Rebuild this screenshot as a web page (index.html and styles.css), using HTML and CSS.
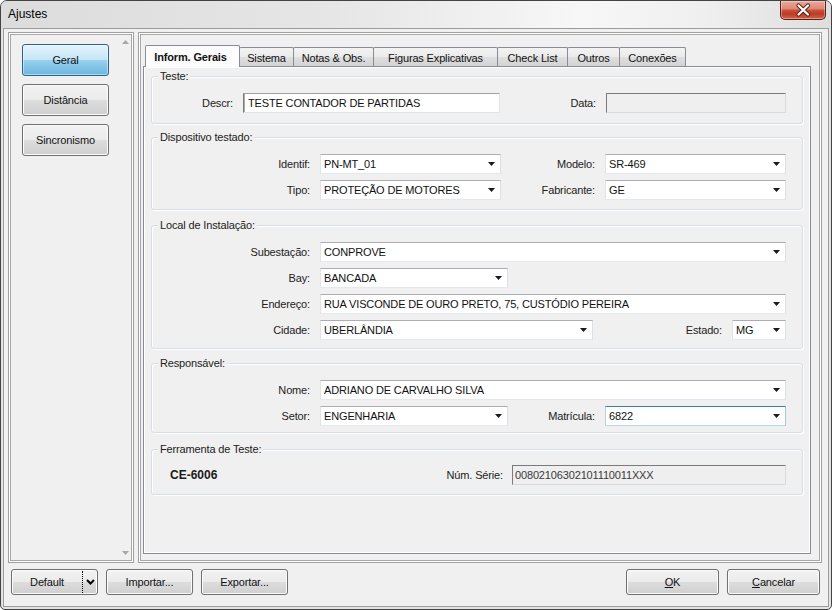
FILE: index.html
```html
<!DOCTYPE html>
<html lang="pt-BR">
<head>
<meta charset="utf-8">
<title>Ajustes</title>
<link rel="stylesheet" href="styles.css">
</head>
<body>
<div class="window">
  <div class="titlebar">
    <span class="title">Ajustes</span>
    <span class="close-btn">
      <svg width="44" height="18" viewBox="0 0 44 18"><path d="M17.5 4.5L27 13.5M27 4.5L17.5 13.5" stroke="#5b1c12" stroke-width="4.2" stroke-linecap="round"/><path d="M17.5 4.5L27 13.5M27 4.5L17.5 13.5" stroke="#ffffff" stroke-width="2.3" stroke-linecap="round"/></svg>
    </span>
  </div>
  <div class="client">
    <div class="main">
      <div class="panel nav">
        <div class="nav-buttons">
          <div class="btn nav-btn nav-btn-active">Geral</div>
          <div class="btn nav-btn">Distância</div>
          <div class="btn nav-btn">Sincronismo</div>
        </div>
        <div class="vscroll">
          <svg width="7" height="4" viewBox="0 0 7 4"><path d="M0 4H7L3.5 0Z" fill="#a8a8a8"/></svg>
          <svg width="7" height="4" viewBox="0 0 7 4"><path d="M0 0H7L3.5 4Z" fill="#a8a8a8"/></svg>
        </div>
      </div>
      <div class="panel content">
        <div class="tabs">
          <div class="tab tab-active t-inform">Inform. Gerais</div>
          <div class="tab t-sistema">Sistema</div>
          <div class="tab t-notas">Notas &amp; Obs.</div>
          <div class="tab t-figuras">Figuras Explicativas</div>
          <div class="tab t-check">Check List</div>
          <div class="tab t-outros">Outros</div>
          <div class="tab t-conexoes">Conexões</div>
        </div>
        <div class="page">
          <div class="group g1">
            <div class="legend">Teste:</div>
            <div class="row">
              <span class="lbl w-descr">Descr:</span>
              <div class="edit w-descr-in"><span class="val">TESTE CONTADOR DE PARTIDAS</span></div>
              <span class="lbl w-data">Data:</span>
              <div class="edit disabled w-data-in"></div>
            </div>
          </div>

          <div class="group g2">
            <div class="legend">Dispositivo testado:</div>
            <div class="row">
              <span class="lbl w-main">Identif:</span>
              <div class="combo w-half"><span class="val">PN-MT_01</span><span class="dd"><svg width="7" height="4" viewBox="0 0 7 4"><path d="M0 0H7L3.5 4Z" fill="#1a1a1a"/></svg></span></div>
              <span class="lbl w-right">Modelo:</span>
              <div class="combo w-half"><span class="val">SR-469</span><span class="dd"><svg width="7" height="4" viewBox="0 0 7 4"><path d="M0 0H7L3.5 4Z" fill="#1a1a1a"/></svg></span></div>
            </div>
            <div class="row">
              <span class="lbl w-main">Tipo:</span>
              <div class="combo w-half"><span class="val">PROTEÇÃO DE MOTORES</span><span class="dd"><svg width="7" height="4" viewBox="0 0 7 4"><path d="M0 0H7L3.5 4Z" fill="#1a1a1a"/></svg></span></div>
              <span class="lbl w-right">Fabricante:</span>
              <div class="combo w-half"><span class="val">GE</span><span class="dd"><svg width="7" height="4" viewBox="0 0 7 4"><path d="M0 0H7L3.5 4Z" fill="#1a1a1a"/></svg></span></div>
            </div>
          </div>

          <div class="group g3">
            <div class="legend">Local de Instalação:</div>
            <div class="row">
              <span class="lbl w-main">Subestação:</span>
              <div class="combo w-full"><span class="val">CONPROVE</span><span class="dd"><svg width="7" height="4" viewBox="0 0 7 4"><path d="M0 0H7L3.5 4Z" fill="#1a1a1a"/></svg></span></div>
            </div>
            <div class="row">
              <span class="lbl w-main">Bay:</span>
              <div class="combo w-short"><span class="val">BANCADA</span><span class="dd"><svg width="7" height="4" viewBox="0 0 7 4"><path d="M0 0H7L3.5 4Z" fill="#1a1a1a"/></svg></span></div>
            </div>
            <div class="row">
              <span class="lbl w-main">Endereço:</span>
              <div class="combo w-full"><span class="val">RUA VISCONDE DE OURO PRETO, 75, CUSTÓDIO PEREIRA</span><span class="dd"><svg width="7" height="4" viewBox="0 0 7 4"><path d="M0 0H7L3.5 4Z" fill="#1a1a1a"/></svg></span></div>
            </div>
            <div class="row">
              <span class="lbl w-main">Cidade:</span>
              <div class="combo w-cidade"><span class="val">UBERLÂNDIA</span><span class="dd"><svg width="7" height="4" viewBox="0 0 7 4"><path d="M0 0H7L3.5 4Z" fill="#1a1a1a"/></svg></span></div>
              <span class="lbl w-estado">Estado:</span>
              <div class="combo w-uf"><span class="val">MG</span><span class="dd"><svg width="7" height="4" viewBox="0 0 7 4"><path d="M0 0H7L3.5 4Z" fill="#1a1a1a"/></svg></span></div>
            </div>
          </div>

          <div class="group g4">
            <div class="legend">Responsável:</div>
            <div class="row">
              <span class="lbl w-main">Nome:</span>
              <div class="combo w-full"><span class="val">ADRIANO DE CARVALHO SILVA</span><span class="dd"><svg width="7" height="4" viewBox="0 0 7 4"><path d="M0 0H7L3.5 4Z" fill="#1a1a1a"/></svg></span></div>
            </div>
            <div class="row">
              <span class="lbl w-main">Setor:</span>
              <div class="combo w-short"><span class="val">ENGENHARIA</span><span class="dd"><svg width="7" height="4" viewBox="0 0 7 4"><path d="M0 0H7L3.5 4Z" fill="#1a1a1a"/></svg></span></div>
              <span class="lbl w-matricula">Matrícula:</span>
              <div class="combo focused w-half"><span class="val">6822</span><span class="dd"><svg width="7" height="4" viewBox="0 0 7 4"><path d="M0 0H7L3.5 4Z" fill="#1a1a1a"/></svg></span></div>
            </div>
          </div>

          <div class="group g5">
            <div class="legend">Ferramenta de Teste:</div>
            <div class="row">
              <span class="tool-name">CE-6006</span>
              <span class="lbl w-serie">Núm. Série:</span>
              <div class="edit disabled w-serie-in"><span class="val">00802106302101110011XXX</span></div>
            </div>
          </div>
        </div>
      </div>
    </div>
    <div class="footer">
      <div class="btn foot-btn split">
        <span class="split-label">Default</span>
        <span class="split-sep"></span>
        <span class="split-arrow"><svg width="9" height="6" viewBox="0 0 9 6"><path d="M1 1L4.5 4.5L8 1" fill="none" stroke="#000" stroke-width="2"/></svg></span>
      </div>
      <div class="btn foot-btn">Importar...</div>
      <div class="btn foot-btn">Exportar...</div>
      <div class="footer-spacer"></div>
      <div class="btn foot-btn-wide"><span><u>O</u>K</span></div>
      <div class="btn foot-btn-wide"><span><u>C</u>ancelar</span></div>
    </div>
  </div>
</div>
</body>
</html>
```
FILE: styles.css
```css
* { box-sizing: border-box; }
html, body { margin: 0; padding: 0; }
body {
  width: 832px;
  height: 610px;
  overflow: hidden;
  background: #ffffff;
  font-family: "Liberation Sans", Arial, sans-serif;
  font-size: 11px;
  letter-spacing: -0.15px;
  color: #222222;
}

/* window frame */
.window {
  width: 832px;
  height: 610px;
  border: 1px solid #434343;
  border-radius: 7px 7px 5px 5px;
  background: #e3e3e3;
  display: flex;
  flex-direction: column;
  overflow: hidden;
}
.titlebar {
  height: 27px;
  flex: none;
  display: flex;
  align-items: flex-start;
  padding: 0 5px 0 7px;
  background: linear-gradient(90deg, #dcdcdc 0%, #e6e6e6 40%, #f7f7f7 70%, #efefef 85%, #dedede 100%);
}
.title {
  line-height: 27px;
  font-size: 12px;
  letter-spacing: 0;
  color: #000;
}
.close-btn {
  margin-left: auto;
  width: 46px;
  height: 19px;
  border: 1px solid #5a2118;
  border-top: none;
  border-radius: 0 0 5px 5px;
  background: linear-gradient(180deg, #eba99a 0%, #dc8a77 42%, #c9503a 52%, #bd3a24 72%, #d4654b 100%);
  box-shadow: inset 0 0 0 1px rgba(255, 255, 255, 0.35);
  display: flex;
  align-items: center;
  justify-content: center;
}
.client {
  flex: 1;
  margin: 0 2px 2px;
  border: 1px solid #9c9c9c;
  background: #f0f0f0;
  display: flex;
  flex-direction: column;
}

/* main area */
.main {
  display: flex;
  gap: 4px;
  height: 531px;
  margin-top: 3px;
  padding-left: 4px;
  flex: none;
}
.panel {
  border: 1px solid #a0a0a0;
  box-shadow: inset 0 0 0 1px #ffffff, inset 0 0 0 2px #a8a8a8;
}
.nav {
  width: 126px;
  display: flex;
  padding-right: 2px;
}
.nav-buttons {
  flex: 1;
  display: flex;
  flex-direction: column;
  gap: 8px;
  padding: 11px 0 0 13px;
}
.vscroll {
  width: 11px;
  display: flex;
  flex-direction: column;
  justify-content: space-between;
  align-items: center;
  padding: 7px 0;
}
.vscroll svg { display: block; }

/* buttons */
.btn {
  border: 1px solid #707070;
  border-radius: 3px;
  background: linear-gradient(180deg, #f2f2f2 0%, #ebebeb 49%, #dddddd 50%, #cfcfcf 100%);
  box-shadow: inset 0 0 0 1px #fbfbfb;
  display: flex;
  align-items: center;
  justify-content: center;
  color: #111;
  white-space: nowrap;
}
.nav-btn {
  width: 87px;
  height: 32px;
}
.nav-btn-active {
  border-color: #2c628b;
  background: linear-gradient(180deg, #e5f4fc 0%, #c4e5f6 49%, #98d1ef 50%, #6cb6de 100%);
  box-shadow: inset 0 0 0 1px rgba(255, 255, 255, 0.45);
}

/* tabs */
.content {
  width: 684px;
  padding: 12px 10px 8px 4px;
  display: flex;
  flex-direction: column;
}
.tabs {
  display: flex;
  align-items: flex-end;
  height: 21px;
  padding-left: 2px;
  flex: none;
}
.tab {
  height: 19px;
  border: 1px solid #898c95;
  border-bottom: none;
  border-radius: 2px 2px 0 0;
  margin-left: -1px;
  padding-top: 1px;
  background: linear-gradient(180deg, #f3f3f3 0%, #ebebeb 49%, #dfdfdf 50%, #d3d3d3 100%);
  display: flex;
  align-items: center;
  justify-content: center;
  white-space: nowrap;
  color: #111;
}
.tab-active {
  height: 22px;
  margin-left: 0;
  margin-bottom: -1px;
  padding-top: 0;
  padding-right: 4px;
  background: #fcfcfc;
  font-weight: bold;
  position: relative;
  z-index: 1;
}
.t-inform { width: 95px; }
.t-sistema { width: 55px; }
.t-notas { width: 81px; }
.t-figuras { width: 125px; }
.t-check { width: 71px; }
.t-outros { width: 53px; }
.t-conexoes { width: 67px; }

.page {
  height: 488px;
  border: 1px solid #898c95;
  box-shadow: inset 0 0 0 1px #ffffff;
  background: #f0f0f0;
  padding: 0 7px;
  display: flex;
  flex-direction: column;
  flex: none;
}

/* group boxes */
.group {
  display: flex;
  flex-direction: column;
  flex: none;
  border: 1px solid #d5dfe5;
  border-radius: 3px;
  box-shadow: inset 1px 1px 0 #ffffff, 1px 1px 0 #ffffff;
}
.legend {
  align-self: flex-start;
  margin: -7px 0 0 6px;
  padding: 0 2px;
  height: 13px;
  line-height: 13px;
  background: #f0f0f0;
  white-space: nowrap;
}
.g1 { margin-top: 9px; padding-bottom: 10px; }
.g2 { margin-top: 13px; padding-bottom: 9px; }
.g3 { margin-top: 15px; padding-bottom: 8px; }
.g4 { margin-top: 14px; padding-bottom: 6px; }
.g5 { margin-top: 16px; padding-bottom: 9px; }

.row {
  display: flex;
  align-items: center;
  height: 20px;
  margin-top: 6px;
  flex: none;
}
.legend + .row { margin-top: 10px; }
.g5 .legend + .row { margin-top: 9px; }

.lbl {
  flex: none;
  text-align: right;
  margin-right: 10px;
  white-space: nowrap;
}
.w-descr { width: 81px; }
.w-data { width: 96px; }
.w-main { width: 158px; }
.w-right { width: 94px; }
.w-estado { width: 129px; }
.w-matricula { width: 87px; }
.w-serie { width: 183px; margin-right: 9px; }

.tool-name {
  flex: none;
  width: 168px;
  padding-left: 18px;
  font-size: 12px;
  font-weight: bold;
  letter-spacing: 0;
  color: #1a1a1a;
}

/* inputs */
.combo, .edit {
  flex: none;
  height: 20px;
  background: #ffffff;
  border: 1px solid;
  display: flex;
  align-items: center;
  color: #111;
  white-space: nowrap;
  overflow: hidden;
}
.combo {
  border-color: #abadb3 #dbdfe6 #e3e9ef #e2e3ea;
}
.combo.focused {
  border-color: #3d7bad #a4c9e3 #b7d9ed #b5cfe7;
}
.combo .val {
  flex: 1;
  padding-left: 3px;
  overflow: hidden;
}
.dd {
  width: 17px;
  height: 18px;
  display: flex;
  align-items: center;
  justify-content: center;
  flex: none;
}
.dd svg { display: block; }
.edit {
  border-color: #a0a0a0 #e3e3e3 #e3e3e3 #7c7c7c;
  box-shadow: inset 1px 0 0 #a8a8a8;
}
.edit .val { padding-left: 4px; }
.edit.disabled {
  background: #efefef;
  border-color: #7a7a7a #dadada #dadada #7a7a7a;
  box-shadow: none;
  color: #3a3a3a;
}
.edit.disabled .val { padding-left: 2px; }

.w-descr-in { width: 257px; }
.w-data-in { width: 180px; }
.w-half { width: 181px; }
.w-full { width: 466px; }
.w-short { width: 188px; }
.w-cidade { width: 273px; }
.w-uf { width: 54px; }
.w-serie-in { width: 274px; }

/* footer */
.footer {
  display: flex;
  height: 26px;
  margin-top: 6px;
  padding: 0 8px 0 7px;
  gap: 8px;
  flex: none;
}
.foot-btn { width: 87px; height: 26px; }
.foot-btn-wide { width: 93px; height: 26px; }
.footer-spacer { flex: 1; }
.split { justify-content: flex-start; }
.split-label {
  width: 70px;
  text-align: center;
}
.split-sep {
  width: 0;
  height: 22px;
  border-left: 1px dotted #000;
}
.split-arrow {
  width: 14px;
  display: flex;
  align-items: center;
  justify-content: center;
}
.split-arrow svg { display: block; }
u { text-decoration: underline; text-underline-offset: 1px; }
```
